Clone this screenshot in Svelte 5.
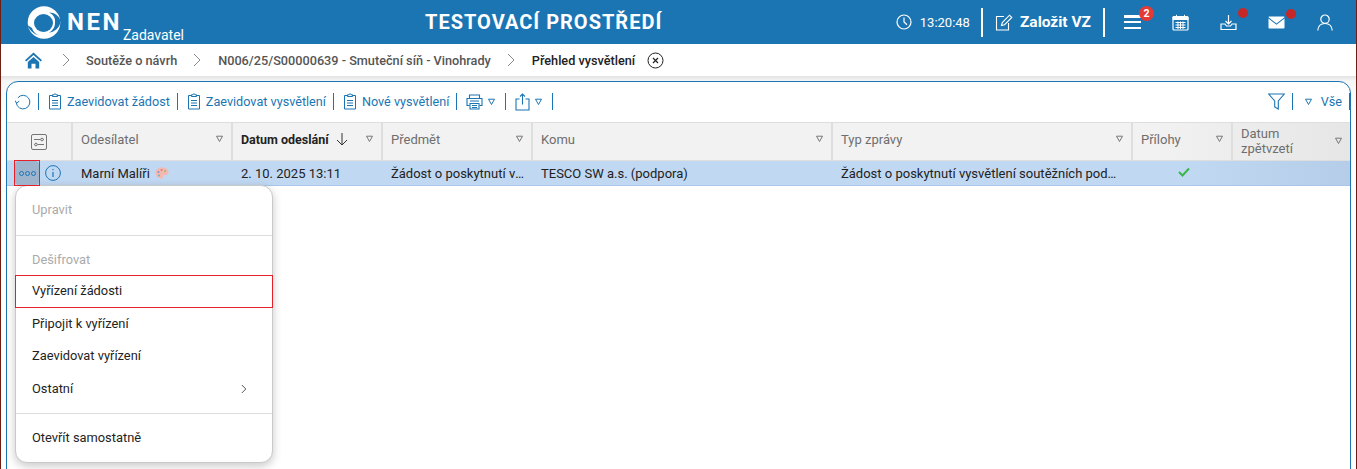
<script>
  const columns = [
    { label: 'Odesílatel', cls: 'c1' },
    { label: 'Datum odeslání', cls: 'c2', sorted: true },
    { label: 'Předmět', cls: 'c3' },
    { label: 'Komu', cls: 'c4' },
    { label: 'Typ zprávy', cls: 'c5' },
    { label: 'Přílohy', cls: 'c6' },
    { label: 'Datum zpětvzetí', cls: 'c7' }
  ];
  const tools = ['Zaevidovat žádost', 'Zaevidovat vysvětlení', 'Nové vysvětlení'];
</script>

{#snippet tri(cls)}
  <svg class={cls} width="9" height="8" viewBox="0 0 9 8"><path d="M1.500 1.200h6L4.500 6.500z" fill="none" stroke="currentColor" stroke-width="1"/></svg>
{/snippet}

{#snippet clip()}
  <svg class="clip" width="14" height="17" viewBox="0 0 14 17" fill="none" stroke="#1b75b3" stroke-width="1"><path d="M4.500 2.500H1.500v13.500h11V2.500H9.500"/><path d="M4.500 3.500V1.800h1.500a1 1 0 0 1 2 0h1.500v1.700z"/><path d="M4 7.500h6M4 10h6M4 12.500h6"/></svg>
{/snippet}

<div class="frame">
  <header class="top">
    <div class="logo">
      <svg width="34" height="33" viewBox="0 0 34 33">
        <circle cx="17" cy="16.500" r="16.300" fill="#fff"/>
        <ellipse cx="16.500" cy="17" rx="9.500" ry="9" fill="#1b75b3"/>
        <path d="M33.600 15C32 9.500 27.500 6.500 22 6.500c5 2.500 6.500 6 6 10 .2 4-2 8-6 10 6-.5 11-5 11.600-11.500z" fill="#1b75b3"/>
        <path d="M.5 19C2 24 6.500 28 12 29.500c-3.500-1.500-6-4-7-7.500z" fill="#1b75b3"/>
      </svg>
      <span class="nen">NEN</span>
      <span class="role">Zadavatel</span>
    </div>
    <div class="env">TESTOVACÍ PROSTŘEDÍ</div>
    <div class="right">
      <svg class="clock" width="16" height="16" viewBox="0 0 16 16" fill="none" stroke="#fff" stroke-width="1.200"><circle cx="8" cy="8" r="7"/><path d="M8 3.500V8l3 2.800"/></svg>
      <span class="time">13:20:48</span>
      <i class="vbar"></i>
      <svg class="edit" width="18" height="17" viewBox="0 0 18 17" fill="none" stroke="#fff" stroke-width="1.100"><path d="M9 2.500H1.500v13.500h12V9"/><path d="M6.500 11.500l.8-3L14.500 1.200l2.300 2.300-7.300 7.200z"/></svg>
      <span class="create">Založit VZ</span>
      <i class="vbar second"></i>
      <span class="ico burger"><i></i><i></i><i></i><b class="badge">2</b></span>
      <svg class="ico cal" width="17" height="17" viewBox="0 0 17 17"><rect x="1" y="2.500" width="15" height="13.500" rx="1" fill="none" stroke="#fff" stroke-width="1.200"/><path d="M1 3h15v2.500H1zM4.500 .8v3M12.500 .8v3" fill="#fff" stroke="#fff"/><path d="M3.500 8.500h10M3.500 11h10M3.500 13.500h10M6 7.500v7.500M8.500 7.500v7.500M11 7.500v7.500" stroke="#fff" stroke-width="1" fill="none"/></svg>
      <span class="ico dl">
        <svg width="17" height="17" viewBox="0 0 17 17" fill="none" stroke="#fff" stroke-width="1.200"><path d="M8.500 1v8.500M5.500 7l3 3 3-3"/><path d="M1 10v5.500h15V10h-4l-1.500 2h-4L5 10z"/></svg>
        <b class="dot"></b>
      </span>
      <span class="ico mail">
        <svg width="17" height="13" viewBox="0 0 17 13"><path d="M.5 1.200C.5.800.8.500 1.200.500h14.600c.4 0 .7.300.7.700L8.500 7.500z" fill="#fff"/><path d="M.5 2.500v9.300c0 .4.300.7.700.7h14.600c.4 0 .7-.3.700-.7V2.500L8.500 8.800z" fill="#fff"/></svg>
        <b class="dot"></b>
      </span>
      <svg class="ico user" width="16" height="17" viewBox="0 0 16 17" fill="none" stroke="#fff" stroke-width="1.200"><circle cx="8" cy="5.200" r="4.200"/><path d="M.8 16.500c.3-4.500 3-7 7.200-7s6.900 2.500 7.200 7"/></svg>
    </div>
  </header>

  <nav class="crumbs">
    <svg class="home" width="17" height="17" viewBox="0 0 17 17"><path d="M8.500 .5L0 8.200l1.200 1.200 7.300-6.500 7.300 6.500L17 8.200z" fill="#1b75b3"/><path d="M2.800 10l5.700-5 5.700 5v6.500H10.500v-4.800H6.500v4.800H2.800z" fill="#1b75b3"/></svg>
    <svg class="sep" width="8" height="14" viewBox="0 0 8 14"><path d="M1 1l6 6-6 6" fill="none" stroke="#8a8a8a"/></svg>
    <span class="crumb">Soutěže o návrh</span>
    <svg class="sep" width="8" height="14" viewBox="0 0 8 14"><path d="M1 1l6 6-6 6" fill="none" stroke="#8a8a8a"/></svg>
    <span class="crumb">N006/25/S00000639 - Smuteční síň - Vinohrady</span>
    <svg class="sep" width="8" height="14" viewBox="0 0 8 14"><path d="M1 1l6 6-6 6" fill="none" stroke="#8a8a8a"/></svg>
    <span class="crumb current">Přehled vysvětlení</span>
    <svg class="close" width="17" height="17" viewBox="0 0 17 17" fill="none" stroke="#222"><circle cx="8.500" cy="8.500" r="7.500"/><path d="M6 6l5 5M11 6l-5 5" stroke-width="1.200"/></svg>
  </nav>

  <main class="stage">
    <section class="panel">
      <div class="toolbar">
        <svg class="refresh" width="16" height="16" viewBox="0 0 16 16" fill="none" stroke="#1b75b3" stroke-width="1"><path d="M2.800 3.800A6.800 6.800 0 1 1 1.300 8.800"/><path d="M0 6.500l1.500 2.500 2.800-1.800"/></svg>
        <i class="tsep"></i>
        {#each tools as t}
          {@render clip()}
          <span class="tool">{t}</span>
          <i class="tsep"></i>
        {/each}
        <svg class="printer" width="17" height="16" viewBox="0 0 17 16" fill="none" stroke="#1b75b3" stroke-width="1.100"><path d="M3.500 4V1h10v3"/><path d="M3.500 11.500H1V4.500h15v7h-2.500"/><path d="M4 7h9M4 13v-3.500h9V15H4zM6 11.500h5M6 13.500h5"/></svg>
        {@render tri('tblue')}
        <i class="tsep"></i>
        <svg class="share" width="15" height="18" viewBox="0 0 15 18" fill="none" stroke="#1b75b3" stroke-width="1.100"><path d="M4.500 6H1v11h13V6h-3.500"/><path d="M7.500 11.500V1M5 3.500L7.500 1 10 3.500"/></svg>
        {@render tri('tblue')}
        <i class="tsep"></i>
        <span class="spacer"></span>
        <svg class="funnel" width="17" height="17" viewBox="0 0 17 17" fill="none" stroke="#1b75b3" stroke-width="1.100"><path d="M.7 1h15.600l-6 7v8l-3.600-2V8z"/></svg>
        <i class="tsep fs"></i>
        {@render tri('tblue all')}
        <span class="tool vse">Vše</span>
        <i class="tsep end"></i>
      </div>

      <div class="thead">
        <div class="cell c0"><svg width="16" height="16" viewBox="0 0 16 16" fill="none" stroke="#666" stroke-width=".9"><rect x=".5" y=".5" width="15" height="15" rx="1.500"/><path d="M3 5.500h6.500M12.500 5.500H13M3 10.500h.5M6.500 10.500H13"/><circle cx="11" cy="5.500" r="1.300"/><circle cx="5" cy="10.500" r="1.300"/></svg></div>
        {#each columns as c}
          <div class="cell {c.cls}" class:sorted={c.sorted}>
            <span class="label">{c.label}</span>
            {#if c.sorted}
              <svg class="arrow" width="12" height="14" viewBox="0 0 12 14" fill="none" stroke="#333"><path d="M6 1v12M1 8l5 5 5-5"/></svg>
            {/if}
            {@render tri('tgray')}
          </div>
        {/each}
      </div>

      <div class="row">
        <div class="cell c0 actions">
          <span class="more"><i></i><i></i><i></i></span>
          <svg class="info" width="16" height="16" viewBox="0 0 16 16" fill="none" stroke="#1b75b3"><circle cx="8" cy="8" r="7.400"/><path d="M8 7v5M8 4v1.300" stroke-width="1.200"/></svg>
        </div>
        <div class="cell c1">
          <span>Marní Malíři</span>
          <svg class="palette" width="14" height="12" viewBox="0 0 14 12"><path d="M7 .5C3 .5.500 2.800.500 6s2.700 5.500 6 5.500c1.500 0 1.800-.8 1.500-1.700-.3-1 .3-1.800 1.500-1.800h2c1 0 2-.7 2-2C13.500 2.500 11 .5 7 .5z" fill="#f4b8b0"/><circle cx="3.500" cy="5" r="1" fill="#8a93c4"/><circle cx="6.500" cy="3" r="1" fill="#d77a8a"/><circle cx="10" cy="4" r="1" fill="#a9b56a"/><circle cx="4" cy="8.500" r="1" fill="#6cb5c9"/></svg>
        </div>
        <div class="cell c2">2. 10. 2025 13:11</div>
        <div class="cell c3"><span class="ell">Žádost o poskytnutí vysvětlení soutěžních podmínek</span></div>
        <div class="cell c4">TESCO SW a.s. (podpora)</div>
        <div class="cell c5"><span class="ell">Žádost o poskytnutí vysvětlení soutěžních podmínek</span></div>
        <div class="cell c6 center"><svg width="12" height="10" viewBox="0 0 12 10" fill="none" stroke="#3cb54a" stroke-width="2"><path d="M1 5l3.500 3.500L11 1.500"/></svg></div>
        <div class="cell c7"></div>
      </div>

      <div class="menu">
        <div class="item disabled first">Upravit</div>
        <hr />
        <div class="item disabled second">Dešifrovat</div>
        <div class="item active">Vyřízení žádosti</div>
        <div class="item">Připojit k vyřízení</div>
        <div class="item">Zaevidovat vyřízení</div>
        <div class="item">Ostatní
          <svg width="6" height="10" viewBox="0 0 6 10"><path d="M.8 1l4 4-4 4" fill="none" stroke="#555"/></svg>
        </div>
        <hr class="low" />
        <div class="item last">Otevřít samostatně</div>
      </div>
    </section>
  </main>
</div>

<style>
  :global(body) { margin: 0; background: #fff; overflow: hidden; }
  .frame {
    width: 1357px; height: 469px; box-sizing: border-box; overflow: hidden;
    border-left: 1px solid #6d1f14; border-right: 1px solid #6d1f14;
    font-family: Roboto, "Liberation Sans", sans-serif; font-size: 13px; color: #222;
    display: flex; flex-direction: column;
  }
  .top {
    height: 44px; flex: none; background: #1b75b3; color: #fff; position: relative;
    display: flex; align-items: center; justify-content: space-between;
  }
  .logo { display: flex; align-items: flex-start; margin-left: 26px; height: 44px; }
  .logo svg { margin-top: 6px; flex: none; }
  .nen { font-size: 24px; font-weight: 700; letter-spacing: 2.500px; margin-left: 6px; margin-top: 6px; line-height: 32px; }
  .role { font-size: 14px; margin-left: 1px; margin-top: 27px; line-height: 16px; }
  .env {
    position: absolute; left: 424px; top: 11px; font-size: 20px; font-weight: 700; letter-spacing: 1px; line-height: 23px;
  }
  .right { display: flex; align-items: center; height: 44px; margin-right: 23px; }
  .time { font-size: 13px; margin-left: 8px; }
  .vbar { width: 2px; height: 29px; background: #fff; margin: 0 12px 0 11px; display: block; }
  .vbar.second { margin: 0 19px 0 12px; }
  .create { font-size: 15.500px; font-weight: 700; margin-left: 7px; }
  .ico { display: block; position: relative; flex: none; }
  .burger { width: 17px; height: 14px; display: flex; flex-direction: column; justify-content: space-between; margin-right: 31px; }
  .burger > i { height: 2.500px; background: #fff; display: block; }
  .badge {
    position: absolute; left: 15px; top: -9px; width: 15px; height: 15px; border-radius: 50%; background: #e53935; color: #fff;
    font-size: 10.500px; font-weight: 700; line-height: 15px; text-align: center;
  }
  .cal { margin-right: 31px; }
  .dl { margin-right: 31px; width: 17px; height: 17px; }
  .dl svg, .mail svg { display: block; }
  .mail { margin-right: 32px; width: 17px; height: 13px; }
  .dot { position: absolute; width: 10px; height: 10px; border-radius: 50%; background: #c62828; left: 18px; top: -6px; }
  .mail .dot { left: 18px; top: -7px; }

  .crumbs { height: 32px; flex: none; display: flex; align-items: center; padding-left: 24px; background: #fff; font-size: 12.700px; font-weight: 500; color: #555; }
  .sep { margin-left: 16px; margin-right: 17px; flex: none; }
  .home + .sep { margin-left: 20px; margin-right: 16px; }
  .crumb { white-space: nowrap; }
  .current { color: #222; }
  .close { margin-left: 12px; }

  .stage { flex: 1; min-height: 0; padding: 5px 5px 0 5px; background: linear-gradient(#e2e2e2, #f6f6f6 5px, #fff 40px); }
  .panel {
    position: relative; height: 500px; box-sizing: border-box; background: #fff;
    border: 1px solid #1b75b3; border-radius: 12px 12px 0 0; overflow: visible;
  }
  .toolbar { height: 40px; box-sizing: border-box; padding-bottom: 1px; display: flex; align-items: center; padding-left: 8px; color: #1b75b3; }
  .tool { font-size: 12.650px; margin-left: 5px; white-space: nowrap; }
  .tsep { width: 1px; height: 17px; background: #1b75b3; display: block; margin: 0 9px 0 7px; flex: none; }
  .refresh, .clip, .printer, .share { flex: none; }
  .tblue { color: #1b75b3; margin-left: 4px; margin-right: 2px; }
  .spacer { flex: 1; }
  .fs { margin: 0 7px 0 7px; }
  .vse { margin-left: 6px; }
  .end { margin: 0 0 0 7px; }
  .thead, .row { display: flex; }
  .thead { height: 39px; box-sizing: border-box; background: linear-gradient(90deg, #f2f2f2 85%, #e6e6e6); border-top: 1px solid #dedede; border-bottom: 1px solid #dedede; color: #6e6e6e; }
  .row { height: 25px; box-sizing: border-box; background: linear-gradient(90deg, #c1d8f2 88%, #b5cde8); border-bottom: 1px solid #a9c6e8; color: #222; }
  .cell { display: flex; align-items: center; box-sizing: border-box; padding-left: 8px; position: relative; white-space: nowrap; flex: none; }
  .thead .cell { border-right: 2px solid #dedede; padding-right: 7px; padding-bottom: 5px; }
  .thead .cell.c0 { padding: 0; }
  .thead .cell.c7 { padding-bottom: 2px; }
  .thead .cell:last-child { border-right: 0; }
  .label { flex: 1; white-space: normal; line-height: 15px; }
  .sorted { color: #222; font-weight: 700; font-size: 12.500px; }
  .sorted .label { flex: none; }
  .arrow { margin-left: 7px; margin-right: auto; }
  .tgray { color: #777; flex: none; }
  .c0 { width: 66px; justify-content: center; padding: 0; }
  .c1 { width: 160px; } .c2 { width: 150px; } .c3 { width: 150px; } .c4 { width: 300px; } .c5 { width: 300px; } .c6 { width: 100px; } .c7 { flex: 1; }
  .row .c1 { gap: 5px; }
  .row .cell { padding-right: 8px; }
  .row .c0 { justify-content: flex-start; padding: 0 0 0 8px; overflow: visible; }
  .more {
    width: 24px; height: 24px; box-sizing: content-box; border: 1px solid #e5202a;
    position: relative; z-index: 2; align-self: flex-start; margin: -1px 0 0 -1px;
    display: flex; align-items: center; justify-content: center; gap: 1px; flex: none;
  }
  .more::before { content: ""; position: absolute; inset: 0; background: #9db4cc; border-radius: 4px; }
  .more > i { width: 3px; height: 3px; border: 1px solid #1b75b3; border-radius: 50%; display: block; box-sizing: content-box; position: relative; }
  .info { margin-left: 5px; flex: none; }
  .ell { display: block; overflow: hidden; text-overflow: ellipsis; width: 100%; }
  .row .center { justify-content: center; padding: 0 0 3px 2px; }

  .menu {
    position: absolute; left: 8px; top: 103px; width: 258px; height: 278px; box-sizing: border-box; background: #fff;
    border: 1px solid #c9c9c9; border-radius: 12px; box-shadow: 0 3px 10px rgba(0,0,0,.22); font-size: 12.850px; color: #222;
  }
  .item { height: 32.500px; line-height: 32px; padding: 0 25px 0 16px; box-sizing: border-box; display: flex; align-items: center; justify-content: space-between; }
  .first { height: 49px; padding-bottom: 2px; }
  .disabled { color: #aaa; }
  .active { outline: 1px solid #e5202a; outline-offset: -1px; margin: 0 -1px; padding-left: 17px; }
  .last { height: 48px; }
  hr { border: 0; border-top: 1px solid #dcdcdc; margin: 0 0 7px; }
  hr.low { margin: 8px 0 0; }
  .item.second { height: 32px; padding-top: 2px; }
</style>
